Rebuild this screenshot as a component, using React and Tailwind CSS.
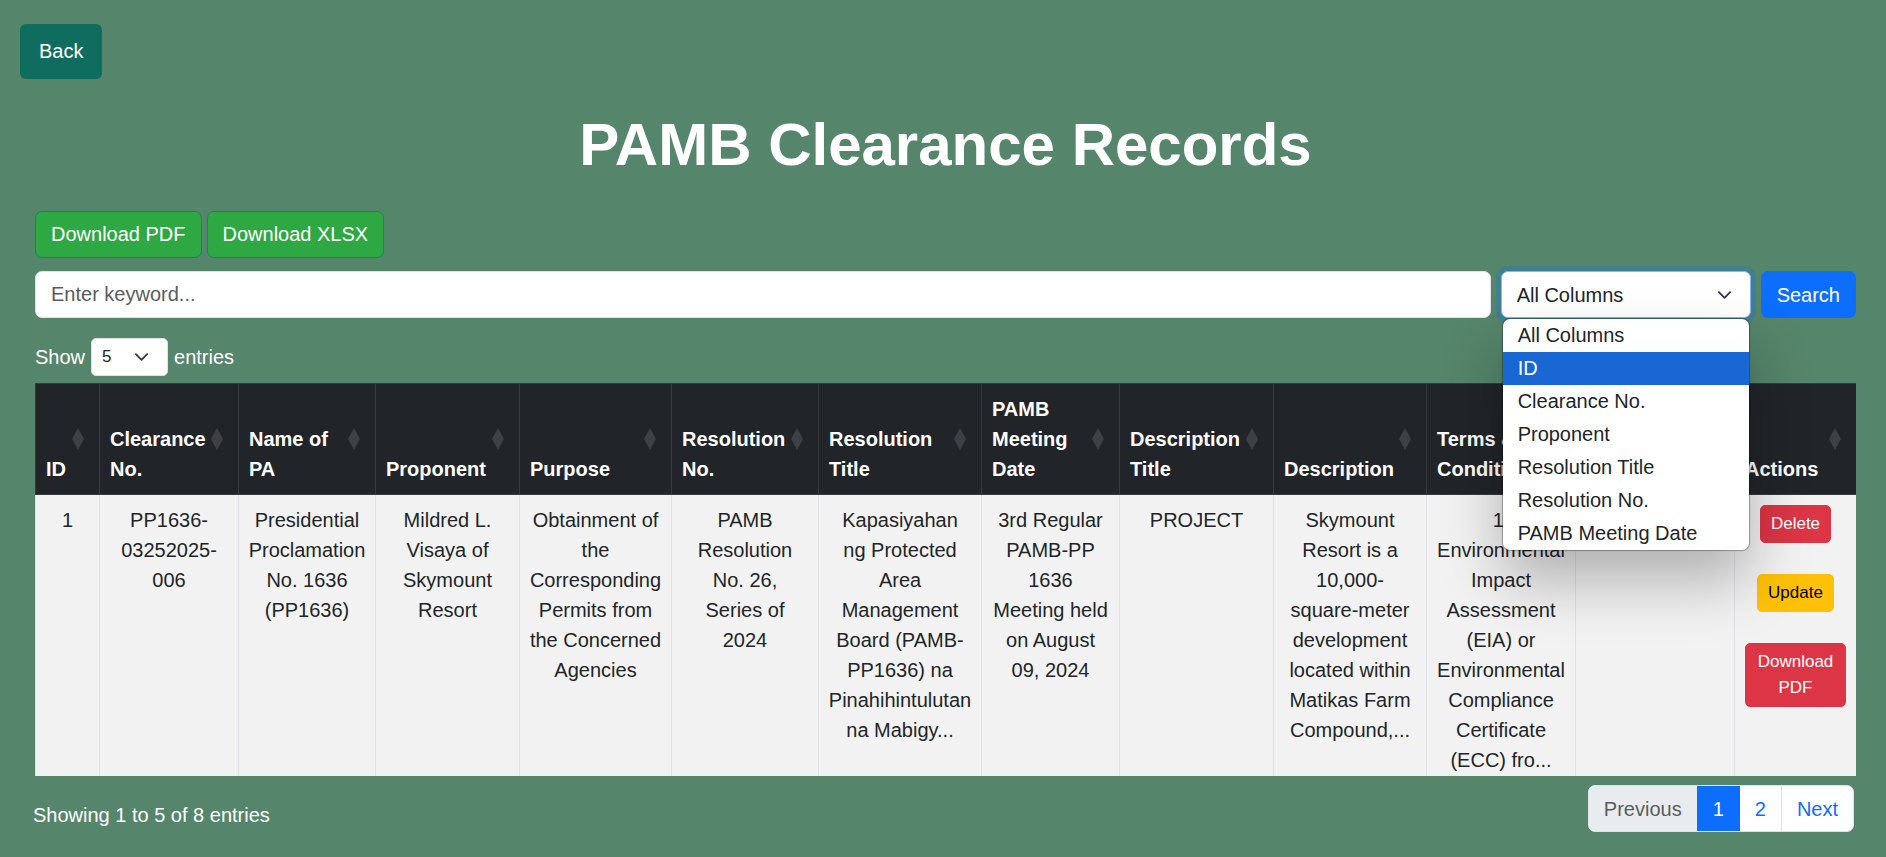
import { useState } from "react";

const columns = [
  { label: "ID", width: "w-[64px]" },
  { label: "Clearance No.", width: "w-[139px]" },
  { label: "Name of PA", width: "w-[137px]" },
  { label: "Proponent", width: "w-[144px]" },
  { label: "Purpose", width: "w-[152px]" },
  { label: "Resolution No.", width: "w-[147px]" },
  { label: "Resolution Title", width: "w-[163px]" },
  { label: "PAMB Meeting Date", width: "w-[138px]" },
  { label: "Description Title", width: "w-[154px]" },
  { label: "Description", width: "w-[153px]" },
  { label: "Terms & Conditions", width: "w-[149px]" },
  { label: "", width: "w-[159px]" },
  { label: "Actions", width: "w-[122px]" },
];

const records = [
  [
    "1",
    "PP1636-03252025-006",
    "Presidential Proclamation No. 1636 (PP1636)",
    "Mildred L. Visaya of Skymount Resort",
    "Obtainment of the Corresponding Permits from the Concerned Agencies",
    "PAMB Resolution No. 26,\nSeries of\n2024",
    "Kapasiyahan\nng Protected\nArea Management Board (PAMB-PP1636) na Pinahihintulutan na Mabigy...",
    "3rd Regular PAMB-PP 1636 Meeting held on August 09, 2024",
    "PROJECT",
    "Skymount Resort is a 10,000-square-meter development located within Matikas Farm Compound,...",
    "1. Environmental Impact Assessment (EIA) or Environmental Compliance Certificate (ECC) fro...",
    "",
  ],
];

const searchFields = [
  "All Columns",
  "ID",
  "Clearance No.",
  "Proponent",
  "Resolution Title",
  "Resolution No.",
  "PAMB Meeting Date",
];

function Chevron({ className }) {
  return (
    <svg
      viewBox="0 0 16 16"
      className={`pointer-events-none absolute top-1/2 -translate-y-1/2 ${className}`}
      fill="none"
      stroke="#343a40"
      strokeWidth="2"
      strokeLinecap="round"
      strokeLinejoin="round"
      aria-hidden="true"
    >
      <path d="m2 5 6 6 6-6" />
    </svg>
  );
}

function SortIcon() {
  return (
    <svg
      viewBox="0 0 12 22"
      className="absolute top-1/2 right-[15px] h-[22px] w-[12px] -translate-y-1/2"
      fill="#3d4144"
      aria-hidden="true"
    >
      <path d="M6 0 12 11 6 22 0 11Z" />
    </svg>
  );
}

function FieldSelect() {
  const [value, setValue] = useState("All Columns");
  const [open, setOpen] = useState(true);
  const [active, setActive] = useState("ID");
  return (
    <div className="relative w-[250px] shrink-0">
      <select
        aria-label="Search column"
        value={value}
        onChange={(e) => setValue(e.target.value)}
        onMouseDown={(e) => {
          e.preventDefault();
          setOpen(!open);
        }}
        className="block h-[47px] w-full appearance-none rounded-[7px] border border-[#86b7fe] bg-white px-[15px] text-[#212529] shadow-[0_0_0_5px_rgba(13,110,253,0.25)] outline-none"
      >
        {searchFields.map((f) => (
          <option key={f}>{f}</option>
        ))}
      </select>
      <Chevron className="right-[19px] size-[15px]" />
      {open && (
        <ul
          role="listbox"
          aria-label="Search column options"
          className="absolute inset-x-[2px] top-[48px] z-20 overflow-hidden rounded-[7px] bg-white text-[#212529] shadow-[0_0_1px_1px_rgba(0,0,0,0.3),0_30px_60px_rgba(0,0,0,0.28)]"
        >
          {searchFields.map((f) => (
            <li
              key={f}
              role="option"
              aria-selected={f === value}
              onMouseEnter={() => setActive(f)}
              onClick={() => {
                setValue(f);
                setOpen(false);
              }}
              className={`px-[15px] leading-[33px] ${f === active ? "bg-[#1967d2] text-white" : ""}`}
            >
              {f}
            </li>
          ))}
        </ul>
      )}
    </div>
  );
}

const downloadButton =
  "rounded-[7px] border border-[#198754] bg-[#2ea843] px-[15px] py-2 leading-[29px] text-white";
const rowButton = "rounded-[5px] border px-[10px] py-[5px] text-[17px] leading-[26px]";

export default function App() {
  return (
    <div className="min-h-screen bg-[#55856b] font-['Liberation_Sans',Arial,sans-serif] text-[20px] leading-[30px] text-white">
      <header className="px-5 pt-6">
        <button className="rounded-[6px] bg-[#0f6d60] px-[19px] py-3 leading-[31px] text-white">Back</button>
      </header>
      <main className="pr-[30px] pl-[35px]">
        <h1 className="mt-[30px] text-center text-[60px] leading-[72px] font-bold">PAMB Clearance Records</h1>

        <div className="mt-[30px] flex gap-[5px]">
          <button className={downloadButton}>Download PDF</button>
          <button className={downloadButton}>Download XLSX</button>
        </div>

        <form className="mt-[13px] flex gap-[10px]" onSubmit={(e) => e.preventDefault()}>
          <input
            type="text"
            aria-label="Keyword"
            placeholder="Enter keyword..."
            className="h-[47px] min-w-0 flex-1 rounded-[7px] border border-[#dee2e6] bg-white px-[15px] text-[#212529] placeholder:text-[#595c5f]"
          />
          <FieldSelect />
          <button className="h-[47px] rounded-[7px] bg-[#0d6efd] px-4 text-white">Search</button>
        </form>

        <div className="mt-5 flex items-center gap-[6px]">
          <label htmlFor="page-size">Show</label>
          <div className="relative">
            <select
              id="page-size"
              defaultValue="5"
              className="block h-[38px] w-[77px] appearance-none rounded-[5px] border border-[#dee2e6] bg-white pl-[10px] text-[17px] text-[#212529]"
            >
              <option>5</option>
              <option>10</option>
              <option>25</option>
            </select>
            <Chevron className="right-[19px] size-[15px]" />
          </div>
          <span>entries</span>
        </div>

        <div className="mt-[7px] max-h-[393px] overflow-auto [scrollbar-width:none]">
          <table className="w-full table-fixed border-collapse">
            <colgroup>
              {columns.map((c, i) => (
                <col key={i} className={c.width} />
              ))}
            </colgroup>
            <thead>
              <tr className="bg-[#212529] text-left align-bottom">
                {columns.map((c, i) => (
                  <th
                    key={i}
                    className="relative border border-[#373b3e] py-[10px] pr-[30px] pl-[10px] font-bold"
                  >
                    {c.label}
                    <SortIcon />
                  </th>
                ))}
              </tr>
            </thead>
            <tbody>
              {records.map((row) => (
                <tr key={row[0]} className="bg-[#f2f2f2] text-center align-top text-[#212529]">
                  {row.map((cell, i) => (
                    <td key={i} className="border border-[#dee2e6] px-[9px] py-[10px] whitespace-pre-line">
                      {cell}
                    </td>
                  ))}
                  <td className="border border-[#dee2e6] px-[10px] py-[10px]">
                    <div className="flex flex-col items-center gap-[31px]">
                      <button className={`${rowButton} border-[#dc3545] bg-[#dc3545] text-white`}>Delete</button>
                      <button className={`${rowButton} border-[#ffc107] bg-[#ffc107] text-black`}>Update</button>
                      <button className={`${rowButton} border-[#dc3545] bg-[#dc3545] text-white`}>
                        Download PDF
                      </button>
                    </div>
                  </td>
                </tr>
              ))}
            </tbody>
          </table>
        </div>
      </main>

      <footer className="flex items-center justify-between pt-[9px] pr-8 pb-6 pl-[33px]">
        <p className="pt-3">Showing 1 to 5 of 8 entries</p>
        <nav aria-label="Pages" className="flex h-[47px] overflow-hidden rounded-[7px] border border-[#dee2e6] bg-white">
          <button disabled className="bg-[#e9ecef] px-[15px] text-[#595c5f]">
            Previous
          </button>
          <a
            href="#1"
            aria-current="page"
            className="-my-px flex items-center bg-[#0d6efd] px-4 text-white"
          >
            1
          </a>
          <a href="#2" className="flex items-center border-r border-[#dee2e6] px-[15px] text-[#0d6efd]">
            2
          </a>
          <a href="#next" className="flex items-center px-[15px] text-[#0d6efd]">
            Next
          </a>
        </nav>
      </footer>
    </div>
  );
}
